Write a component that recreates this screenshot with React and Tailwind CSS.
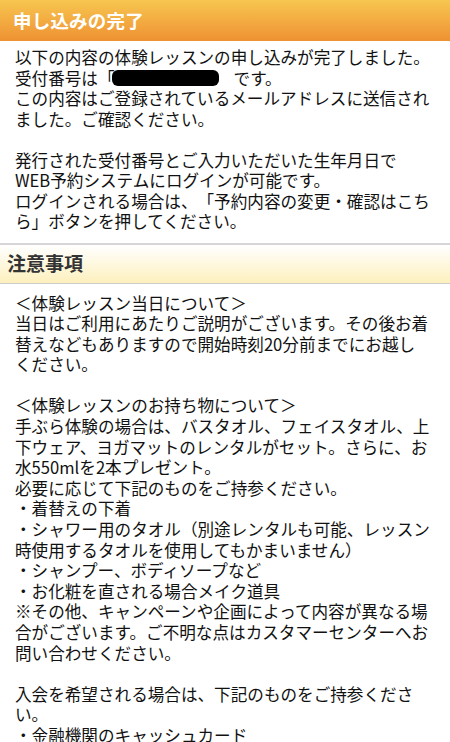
const font = {
  fontFamily: '"Hiragino Kaku Gothic ProN", "Noto Sans CJK JP", "Noto Sans", sans-serif',
};

const notes = [
  "＜体験レッスン当日について＞",
  ["当日はご利用にあたりご説明がございます。その後お着", "替えなどもありますので開始時刻20分前までにお越し", "ください。"],
  "",
  "＜体験レッスンのお持ち物について＞",
  "手ぶら体験の場合は、バスタオル、フェイスタオル、上下ウェア、ヨガマットのレンタルがセット。さらに、お水550mlを2本プレゼント。",
  "必要に応じて下記のものをご持参ください。",
  "・着替えの下着",
  "・シャワー用のタオル（別途レンタルも可能、レッスン時使用するタオルを使用してもかまいません）",
  "・シャンプー、ボディソープなど",
  "・お化粧を直される場合メイク道具",
  "※その他、キャンペーンや企画によって内容が異なる場合がございます。ご不明な点はカスタマーセンターへお問い合わせください。",
  "",
  "入会を希望される場合は、下記のものをご持参ください。",
  "・金融機関のキャッシュカード",
  "・金融機関のお届け印",
];

function Line({ text }) {
  if (!text) return <div className="h-[20.5px]" />;
  if (Array.isArray(text))
    return (
      <div>
        {text.map((t, i) => (
          <p key={i}>{t}</p>
        ))}
      </div>
    );
  return <p>{text}</p>;
}

export default function App() {
  return (
    <div
      className="w-[450px] min-h-[742px] bg-white text-[#111] [text-spacing-trim:space-all]"
      style={font}
    >
      <div className="h-[41px] flex items-center px-[13px] bg-gradient-to-b from-[#f7c650] to-[#ee9132]">
        <h1 className="text-white text-[18.5px] font-semibold tracking-[0.2px]">
          申し込みの完了
        </h1>
      </div>

      <div className="px-[15px] pt-[6px] pb-[11px] text-[16.6px] leading-[20.5px]">
        <p>以下の内容の体験レッスンの申し込みが完了しました。</p>
        <p className="flex items-center">
          <span>受付番号は「</span>
          <span className="inline-block -ml-[3px] w-[107px] h-[16px] rounded-[6px] bg-black" />
          <span className="ml-[15px]">です。</span>
        </p>
        <p>この内容はご登録されているメールアドレスに送信されました。ご確認ください。</p>
        <div className="h-[20.5px]" />
        <p>発行された受付番号とご入力いただいた生年月日で</p>
        <p>WEB予約システムにログインが可能です。</p>
        <p>ログインされる場合は、「予約内容の変更・確認はこちら」ボタンを押してください。</p>
      </div>

      <div className="h-[41px] flex items-center px-[7px] border-t-2 border-b border-t-[#d6d6d6] border-b-[#cdcdcd] bg-gradient-to-b from-white to-[#fdf0bd]">
        <h2 className="text-[19px] font-bold text-[#333]">注意事項</h2>
      </div>

      <div className="px-[15px] pt-[9px] text-[16.6px] leading-[20.6px]">
        {notes.map((t, i) => (
          <Line key={i} text={t} />
        ))}
      </div>
    </div>
  );
}
